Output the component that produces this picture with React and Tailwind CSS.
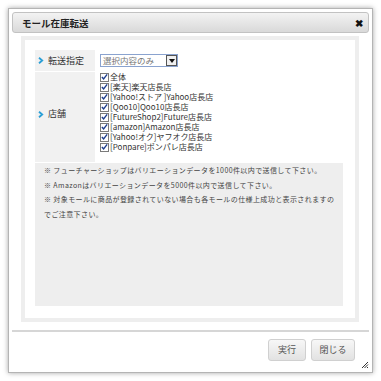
import React from "react";

const stores = [
  "全体",
  "[楽天]楽天店長店",
  "[Yahoo!ストア ]Yahoo店長店",
  "[Qoo10]Qoo10店長店",
  "[FutureShop2]Future店長店",
  "[amazon]Amazon店長店",
  "[Yahoo!オク]ヤフオク店長店",
  "[Ponpare]ポンパレ店長店",
];

function Check() {
  return (
    <span className="inline-flex w-[9px] h-[9px] border border-[#7b7b7b] bg-white items-center justify-center mr-[1px] shrink-0">
      <svg width="8" height="8" viewBox="0 0 8 8">
        <path d="M1 4 L3 6.3 L7 1" fill="none" stroke="#1f3f8f" strokeWidth="1.6" />
      </svg>
    </span>
  );
}

function Label({ children }) {
  return (
    <div className="flex items-center pl-[3px] text-[9px] leading-[12px] text-[#333]">
      <svg width="6" height="7" viewBox="0 0 6 7" className="mr-[4px]">
        <path d="M1 0.8 L4.2 3.5 L1 6.2" fill="none" stroke="#2a9fd6" strokeWidth="1.8" />
      </svg>
      {children}
    </div>
  );
}

export default function App() {
  return (
    <div
      className="w-[381px] h-[381px] bg-white p-2"
      style={{ fontFamily: '"Noto Sans CJK JP", "Noto Sans", sans-serif' }}
    >
      <div className="relative w-[365px] h-[365px] border border-[#b4b4b4] bg-white p-[3px] flex flex-col shadow-[0_0_5px_rgba(0,0,0,0.35)]">
        <div className="h-[21px] rounded-[3px] border border-[#c2c2c2] bg-gradient-to-b from-[#f3f3f3] to-[#d9d9d9] flex items-center justify-between pl-[9px] pr-[5px]">
          <span className="text-[9.5px] font-bold text-[#222] leading-[12px]">モール在庫転送</span>
          <span className="text-[10px] font-bold text-[#111] leading-[12px]">✖</span>
        </div>
        <div className="mt-[3px] ml-[9px] mr-[10px] h-[286px] border-[4px] border-[#eeeeee] pt-[10px] pl-[10px] pr-[12px] pb-[12px] flex flex-col gap-[1px]">
          <div className="flex h-[21px] gap-[1px]">
            <div className="w-[60px] bg-[#f1f1f1] flex items-center">
              <Label>転送指定</Label>
            </div>
            <div className="flex-1 flex items-center pl-[4px]">
              <div className="w-[78px] h-[13px] border border-[#8aa3cf] flex items-center justify-between bg-white">
                <span className="text-[8.5px] text-[#777] pl-[2px] leading-[11px]">選択内容のみ</span>
                <span className="w-[11px] h-[11px] border border-[#555] bg-[#f0f0f0] flex items-center justify-center">
                  <svg width="6" height="4" viewBox="0 0 6 4">
                    <path d="M0 0 L6 0 L3 4 Z" fill="#111" />
                  </svg>
                </span>
              </div>
            </div>
          </div>
          <div className="flex h-[90px] gap-[1px]">
            <div className="w-[60px] bg-[#f1f1f1] flex items-center pb-[6px]">
              <Label>店舗</Label>
            </div>
            <div className="flex-1 pl-[4px] pt-0 flex flex-col">
              {stores.map((s) => (
                <div key={s} className="flex items-center h-[10px] text-[8px] text-[#333] leading-[10px]">
                  <Check />
                  <span className="whitespace-nowrap">{s}</span>
                </div>
              ))}
            </div>
          </div>
          <div className="flex-1 bg-[#eeeeee] pl-[9px] pr-[4px] pt-[0px] text-[7px] leading-[14.5px] text-[#444] tracking-[0.4px]">
            <div>※ フューチャーショップはバリエーションデータを1000件以内で送信して下さい。</div>
            <div>※ Amazonはバリエーションデータを5000件以内で送信して下さい。</div>
            <div>※ 対象モールに商品が登録されていない場合も各モールの仕様上成功と表示されますのでご注意下さい。</div>
          </div>
        </div>
        <div className="mt-[8px] h-[2px] bg-[#d6d6d6]"></div>
        <div className="flex justify-end gap-[5px] mt-[7px] mr-[14px]">
          <button className="w-[38px] h-[22px] rounded-[3px] border border-[#d0d0d0] bg-gradient-to-b from-[#f7f7f7] to-[#e2e2e2] text-[9px] text-[#555]">実行</button>
          <button className="w-[44px] h-[22px] rounded-[3px] border border-[#d0d0d0] bg-gradient-to-b from-[#f7f7f7] to-[#e2e2e2] text-[9px] text-[#555]">閉じる</button>
        </div>
        <svg className="absolute right-[3px] bottom-[3px]" width="8" height="8" viewBox="0 0 8 8">
          <path d="M7 1 L1 7 M7 3.5 L3.5 7 M7 6 L6 7" stroke="#333" strokeWidth="1" />
        </svg>
      </div>
    </div>
  );
}
